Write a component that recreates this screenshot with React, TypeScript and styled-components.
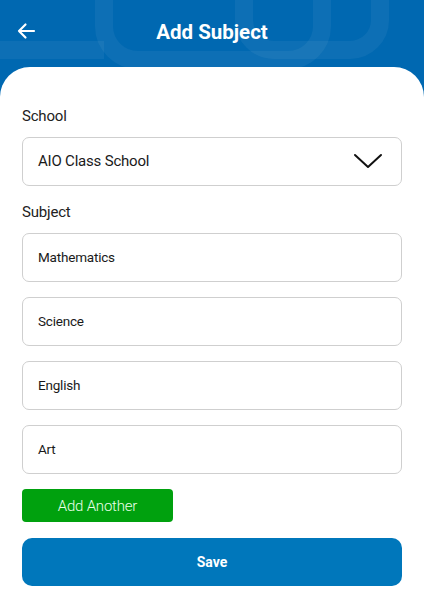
import React, { ReactElement } from 'react';
import styled, { createGlobalStyle } from 'styled-components';

const GlobalStyle = createGlobalStyle`
  * { box-sizing: border-box; }
  html, body { margin: 0; padding: 0; }
  body {
    font-family: Roboto, "Noto Sans", "Liberation Sans", sans-serif;
    background: #ffffff;
    color: #1f1f1f;
  }
`;

const subjects = ['Mathematics', 'Science', 'English', 'Art'];

const BackIcon = () => (
  <svg width="20" height="20" viewBox="0 0 20 20" fill="none">
    <path d="M18 10H3M9.5 3.5L3 10l6.5 6.5" stroke="#fff" strokeWidth="2.2" strokeLinecap="round" strokeLinejoin="round" />
  </svg>
);

const Chevron = () => (
  <svg width="30" height="16" viewBox="0 0 30 16" fill="none">
    <path d="M2 2l13 12L28 2" stroke="#111" strokeWidth="2" strokeLinecap="round" strokeLinejoin="round" />
  </svg>
);

// faint rounded shapes behind the header
const HeaderPattern = () => (
  <PatternSvg width="424" height="100" viewBox="0 0 424 100" fill="none">
    <g stroke="rgba(255,255,255,0.05)" strokeWidth="18">
      <rect x="104" y="-60" width="218" height="120" rx="34" />
      <rect x="244" y="-70" width="136" height="120" rx="30" />
      <path d="M-10 50H104" />
    </g>
  </PatternSvg>
);

export default function App(): ReactElement {
  return (
    <>
      <GlobalStyle />
      <Screen>
        <Header>
          <HeaderPattern />
          <BackButton aria-label="Back">
            <BackIcon />
          </BackButton>
          <Title>Add Subject</Title>
        </Header>
        <Card>
          <Label>School</Label>
          <Select>
            <SelectText>AIO Class School</SelectText>
            <Chevron />
          </Select>
          <Label $spaced>Subject</Label>
          <Fields>
            {subjects.map(s => (
              <Field key={s}>{s}</Field>
            ))}
          </Fields>
          <AddButton>Add Another</AddButton>
          <SaveButton>Save</SaveButton>
        </Card>
      </Screen>
    </>
  );
}

const Screen = styled.div`
  width: 424px;
  min-height: 610px;
  background: #0068b1;
  display: flex;
  flex-direction: column;
  overflow: hidden;
`;

const Header = styled.header`
  position: relative;
  height: 67px;
  display: flex;
  align-items: center;
  justify-content: center;
  padding-bottom: 4px;
`;

const PatternSvg = styled.svg`
  position: absolute;
  left: 0;
  top: 0;
  pointer-events: none;
`;

const BackButton = styled.button`
  position: absolute;
  left: 16px;
  top: 21px;
  background: none;
  border: 0;
  padding: 0;
  display: flex;
`;

const Title = styled.h1`
  position: relative;
  margin: 0;
  color: #fff;
  font-size: 20.5px;
  font-weight: 700;
`;

const Card = styled.main`
  flex: 1;
  background: #fff;
  border-radius: 30px 30px 0 0;
  padding: 40px 22px 24px;
  display: flex;
  flex-direction: column;
`;

const Label = styled.div<{ $spaced?: boolean }>`
  font-size: 15px;
  letter-spacing: -0.2px;
  line-height: 19px;
  color: #222;
  margin-top: ${p => (p.$spaced ? '17px' : '0')};
  margin-bottom: ${p => (p.$spaced ? '11.5px' : '11px')};
`;

const Box = styled.div`
  height: 48.5px;
  border: 1.5px solid #cfcfcf;
  border-radius: 7px;
  display: flex;
  align-items: center;
  padding: 0 16px 0 15px;
`;

const Select = styled(Box)`
  justify-content: space-between;
  padding-right: 18px;
`;

const SelectText = styled.span`
  font-size: 15px;
  letter-spacing: -0.2px;
  color: #1a1a1a;
`;

const Fields = styled.div`
  display: flex;
  flex-direction: column;
  gap: 15.5px;
`;

const Field = styled(Box)`
  font-size: 13.5px;
  letter-spacing: -0.2px;
  color: #1a1a1a;
`;

const AddButton = styled.button`
  align-self: flex-start;
  margin-top: 15.5px;
  width: 151px;
  height: 33px;
  border: 0;
  border-radius: 4px;
  background: #00a10e;
  color: #eaffea;
  font-family: Roboto, "Noto Sans", sans-serif;
  font-size: 15px;
  letter-spacing: -0.2px;
  font-weight: 300;
`;

const SaveButton = styled.button`
  margin-top: 16px;
  height: 48px;
  border: 0;
  border-radius: 10px;
  background: #0077bb;
  color: #fff;
  font-family: Roboto, "Noto Sans", sans-serif;
  font-size: 14px;
  font-weight: 700;
`;
